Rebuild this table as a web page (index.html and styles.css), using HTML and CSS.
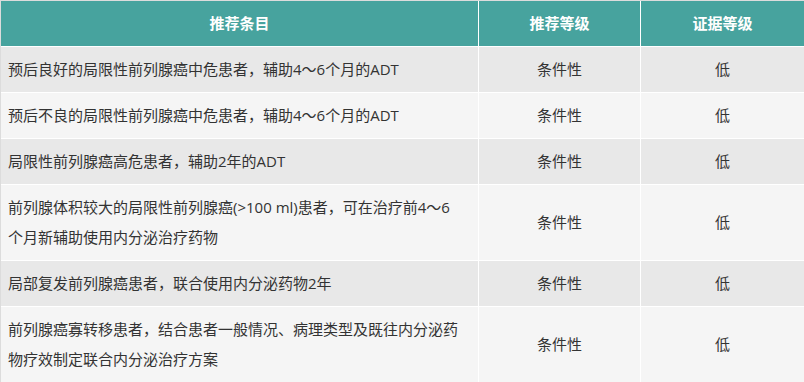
FILE: index.html
```html
<!DOCTYPE html>
<html lang="zh-CN">
<head>
<meta charset="utf-8">
<title>推荐条目</title>
<link rel="stylesheet" href="styles.css">
</head>
<body>
<table class="rec-table">
  <thead>
    <tr>
      <th class="col-item">推荐条目</th>
      <th class="col-grade">推荐等级</th>
      <th class="col-evidence">证据等级</th>
    </tr>
  </thead>
  <tbody>
    <tr>
      <td class="item">预后良好的局限性前列腺癌中危患者，辅助4～6个月的ADT</td>
      <td class="center">条件性</td>
      <td class="center last">低</td>
    </tr>
    <tr>
      <td class="item">预后不良的局限性前列腺癌中危患者，辅助4～6个月的ADT</td>
      <td class="center">条件性</td>
      <td class="center last">低</td>
    </tr>
    <tr>
      <td class="item">局限性前列腺癌高危患者，辅助2年的ADT</td>
      <td class="center">条件性</td>
      <td class="center last">低</td>
    </tr>
    <tr>
      <td class="item">前列腺体积较大的局限性前列腺癌(&gt;100 ml)患者，可在治疗前4～6<br>个月新辅助使用内分泌治疗药物</td>
      <td class="center">条件性</td>
      <td class="center last">低</td>
    </tr>
    <tr>
      <td class="item">局部复发前列腺癌患者，联合使用内分泌药物2年</td>
      <td class="center">条件性</td>
      <td class="center last">低</td>
    </tr>
    <tr>
      <td class="item">前列腺癌寡转移患者，结合患者一般情况、病理类型及既往内分泌药物疗效制定联合内分泌治疗方案</td>
      <td class="center">条件性</td>
      <td class="center last">低</td>
    </tr>
  </tbody>
</table>
</body>
</html>
```
FILE: styles.css
```css
html, body {
  margin: 0;
  padding: 0;
  overflow: hidden;
  background: #ffffff;
}

.rec-table {
  table-layout: fixed;
  width: 804px;
  border-collapse: separate;
  border-spacing: 0;
  border-top: 1px solid #dcdcdc;
  border-left: 1px solid #dcdcdc;
  font-family: "Open Sans", "Noto Sans CJK SC", sans-serif;
  font-size: 15px;
  line-height: 30px;
  color: #333333;
}

.rec-table th,
.rec-table td {
  box-sizing: border-box;
  padding: 7px 7px 8px 7px;
  border-right: 1px solid #ffffff;
  border-bottom: 1px solid #ffffff;
  vertical-align: middle;
}

.rec-table th {
  background: #47a39e;
  color: #ffffff;
  font-weight: bold;
  text-align: center;
}

.rec-table th.col-item { width: 478px; }
.rec-table th.col-grade { width: 162px; }
.rec-table th.col-evidence { width: 163px; border-right: none; }

.rec-table td.last { border-right: none; }

.rec-table tbody tr:nth-child(odd) td { background: #e8e8e8; }
.rec-table tbody tr:nth-child(even) td { background: #f5f5f5; }

.rec-table td.item {
  text-align: left;
  padding-right: 7px;
}
.center { text-align: center; }
```
